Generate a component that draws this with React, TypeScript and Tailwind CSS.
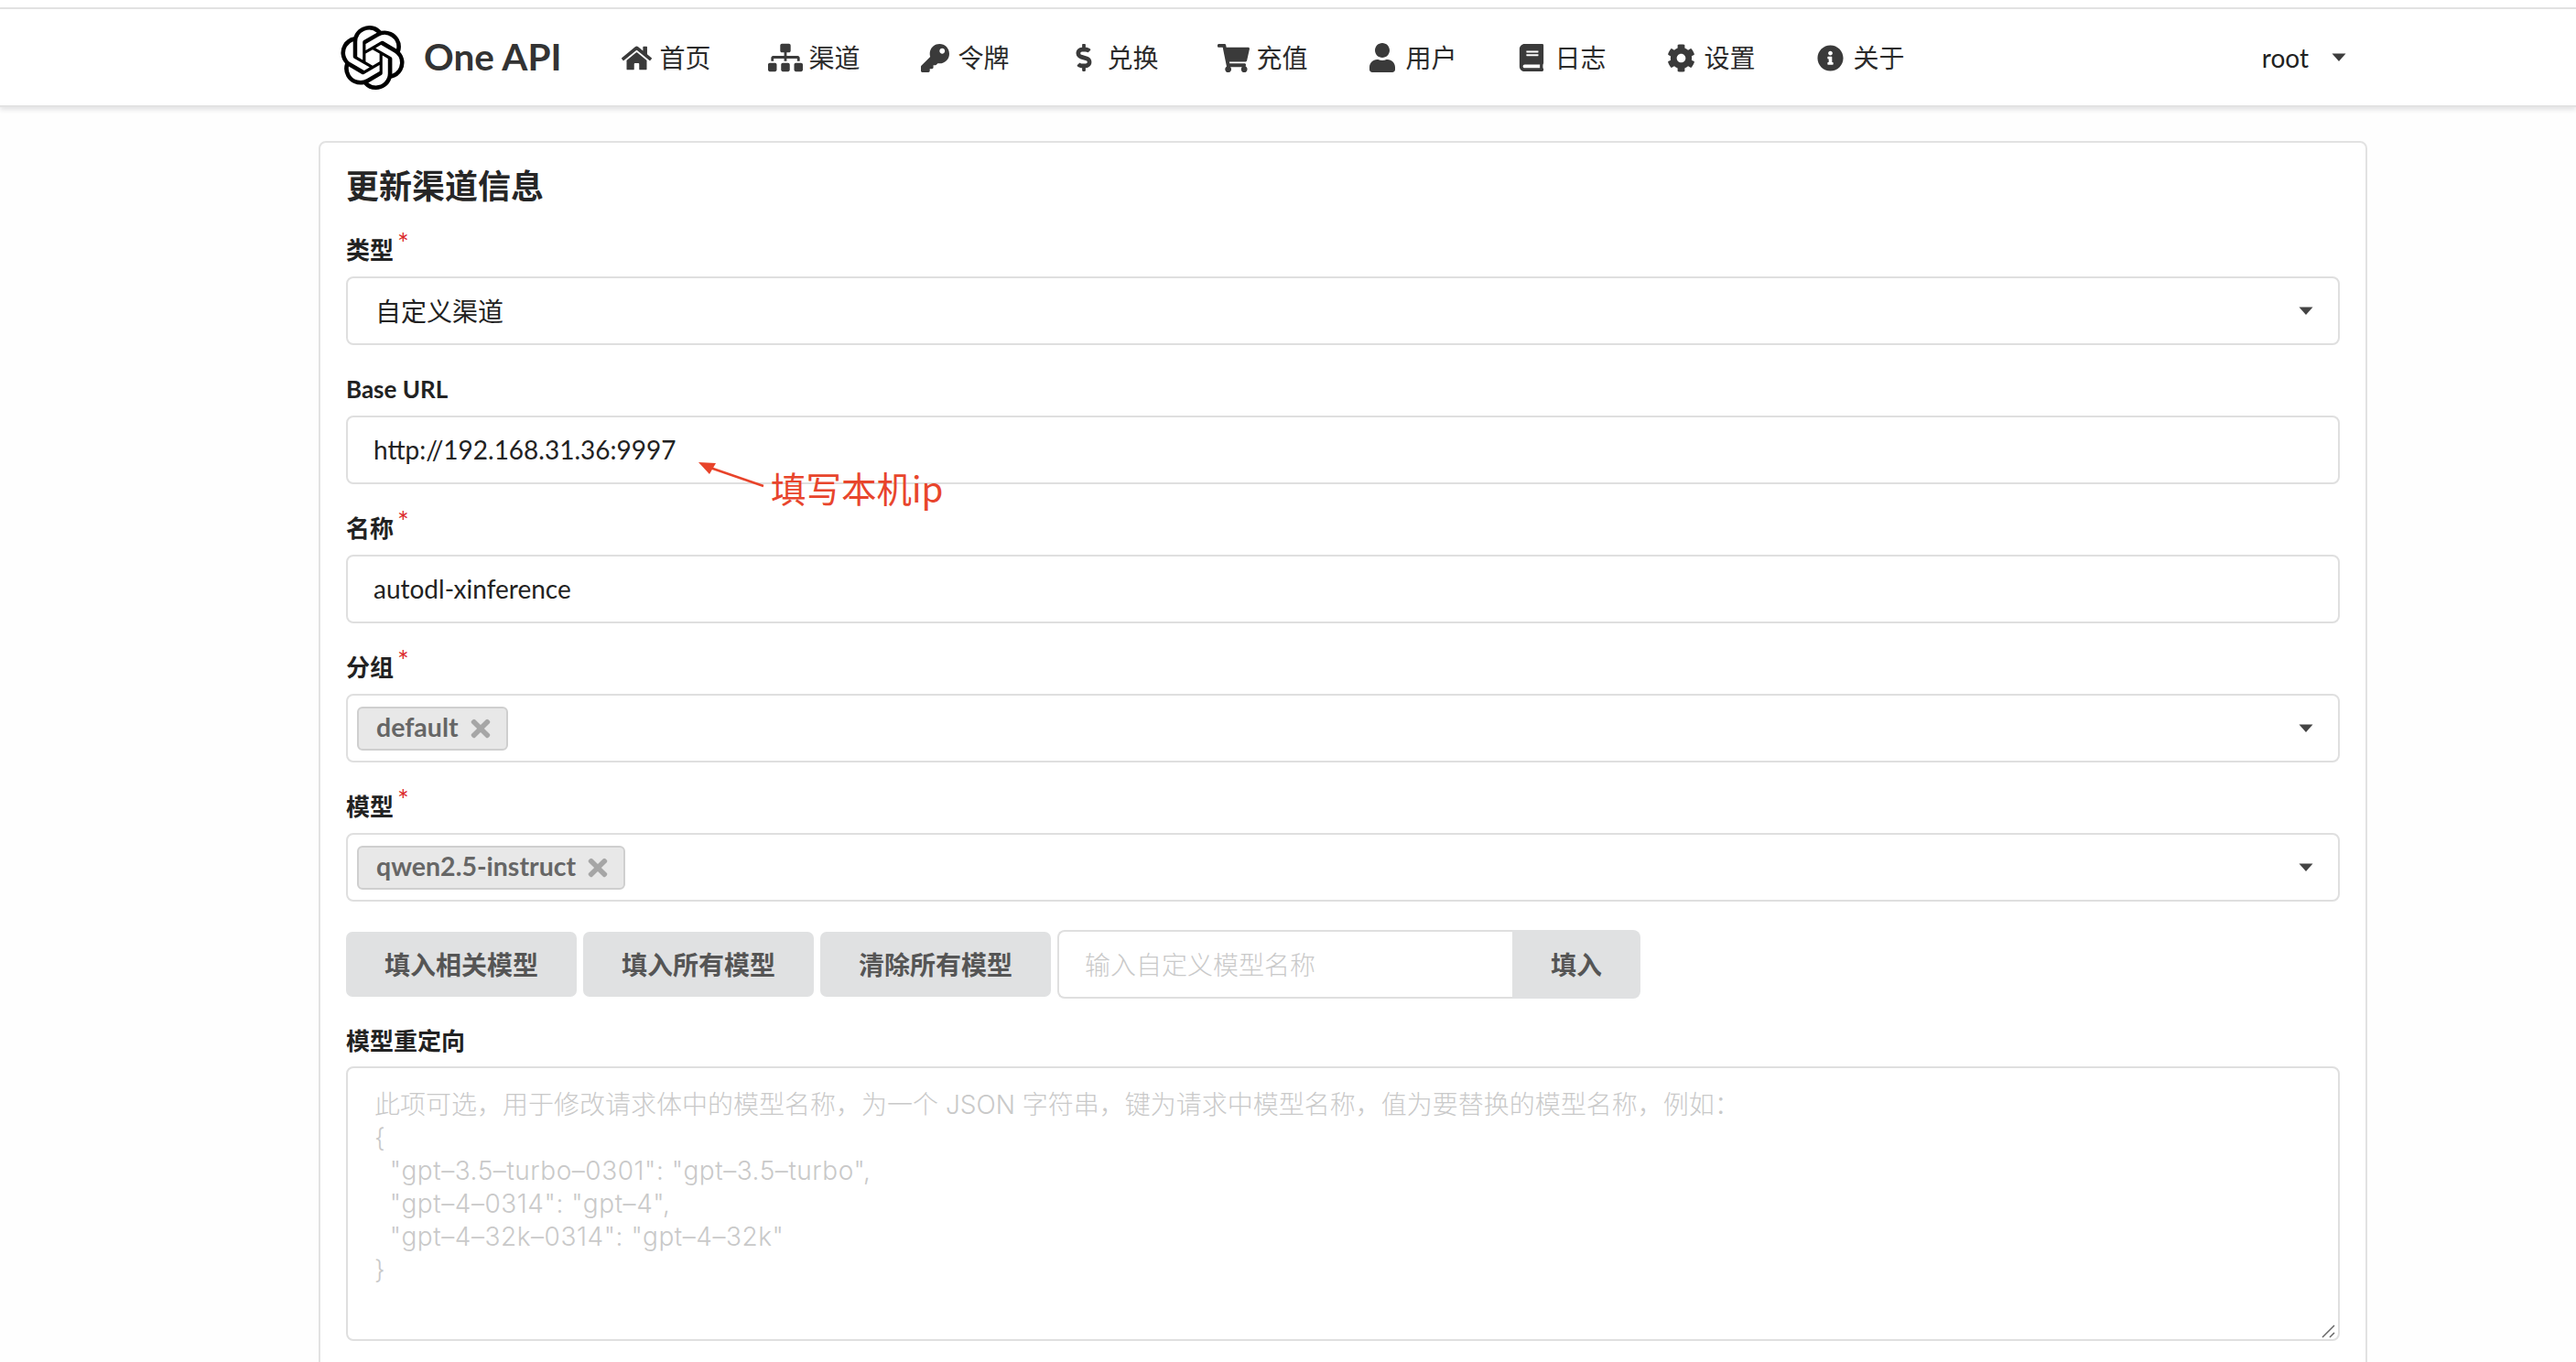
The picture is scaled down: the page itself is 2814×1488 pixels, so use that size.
import React from "react";
import { SiOpenai } from "react-icons/si";
import {
  FaHome, FaSitemap, FaKey, FaDollarSign, FaShoppingCart, FaUser, FaBook, FaCog, FaInfoCircle, FaTimes,
} from "react-icons/fa";

const FONT = "font-['Lato','Noto_Sans_CJK_SC',sans-serif]";

const NAV = [
  { label: "首页", Icon: FaHome, size: 33 },
  { label: "渠道", Icon: FaSitemap, size: 38 },
  { label: "令牌", Icon: FaKey, size: 31 },
  { label: "兑换", Icon: FaDollarSign, size: 30 },
  { label: "充值", Icon: FaShoppingCart, size: 35 },
  { label: "用户", Icon: FaUser, size: 32 },
  { label: "日志", Icon: FaBook, size: 30 },
  { label: "设置", Icon: FaCog, size: 31 },
  { label: "关于", Icon: FaInfoCircle, size: 29 },
];

function Caret({ color = "#3d3d3d" }: { color?: string }) {
  return (
    <svg width="16" height="9" viewBox="0 0 16 9" className="shrink-0">
      <path d="M0.5 0.5 H15.5 L8 9 Z" fill={color} />
    </svg>
  );
}

function Label({ text, required }: { text: string; required?: boolean }) {
  return (
    <div className="flex h-[24px] mb-[17px] items-center text-[26px] leading-[24px] font-bold text-[#222222]">
      <span>{text}</span>
      {required && <span className="ml-[4px] text-[#db2828] text-[30px] font-normal relative top-[-8px]">*</span>}
    </div>
  );
}

function Box({ children, className = "" }: { children?: React.ReactNode; className?: string }) {
  return (
    <div className={`h-[75px] w-full flex items-center rounded-[8px] border-2 border-[#dfdfdf] bg-white text-[28px] text-[#222222] ${className}`}>
      {children}
    </div>
  );
}

function Tag({ text }: { text: string }) {
  return (
    <div className="ml-[10px] h-[48px] flex items-center rounded-[6px] border-2 border-[#cfcfcf] bg-[#e8e8e8] pl-[19px] pr-[13px] text-[28.5px] font-bold text-[#666666]">
      <span className="relative top-[-1px]">{text}</span>
      <FaTimes size={30} color="#a6a6a6" className="ml-[9px]" />
    </div>
  );
}

function Btn({ text, className = "" }: { text: string; className?: string }) {
  return (
    <div className={`flex items-center justify-center bg-[#e0e1e2] text-[28px] font-bold text-[#555555] ${className}`}>
      {text}
    </div>
  );
}

export default function App() {
  return (
    <div className={`h-[1488px] overflow-hidden bg-[#fefefe] ${FONT}`}>
      <div className="h-[8px] bg-white" />
      <nav className="h-[109px] border-y-2 border-[#e2e2e2] bg-white shadow-[0_3px_5px_rgba(34,36,38,0.12)]">
        <div className="ml-[340px] w-[2255px] h-full flex items-center justify-between">
          <div className="flex items-center">
            <div className="flex items-center pl-[32px] pr-[32px]">
              <SiOpenai size={70} color="#000000" className="mt-[1px]" />
              <span className="ml-[21px] text-[40.5px] font-bold text-[#333333] leading-none">One API</span>
            </div>
            {NAV.map(({ label, Icon, size }) => (
              <div key={label} className="w-[163px] pl-[33px] mt-[1px] flex items-center text-[28px] text-[#2b2b2b]">
                <div className="w-[33px] h-[33px] flex items-center justify-center">
                  <Icon size={size} color="#3a3a3a" className="shrink-0" />
                </div>
                <span className="ml-[9px]">{label}</span>
              </div>
            ))}
          </div>
          <div className="flex items-center pr-[32px] text-[28px] text-[#222222]">
            <span>root</span>
            <span className="ml-[25px]"><Caret /></span>
          </div>
        </div>
      </nav>

      <main className="ml-[348px] mt-[37px] w-[2238px] rounded-[8px] border-2 border-[#e2e2e2] bg-white px-[28px] pt-[29px] min-h-[1400px]">
        <h2 className="h-[36px] mb-[40px] flex items-center text-[36px] font-bold text-[#262626]">更新渠道信息</h2>

        <div className="mb-[36px]">
          <Label text="类型" required />
          <Box className="justify-between pl-[30px] pr-[27px]">
            <span>自定义渠道</span>
            <Caret color="#444444" />
          </Box>
        </div>

        <div className="mb-[36px] relative">
          <Label text="Base URL" />
          <Box className="pl-[28px]"><span className="relative top-[-1px]">http://192.168.31.36:9997</span></Box>
          <div className="absolute left-[385px] top-[92px] flex items-start">
            <svg width="72" height="30" viewBox="0 0 72 30">
              <path d="M71 26 L10 5" stroke="#e8432a" strokeWidth="2.5" fill="none" />
              <path d="M0 0 L19 1 L12 13 Z" fill="#e8432a" />
            </svg>
            <span className="ml-[7px] mt-[4px] text-[38.5px] leading-[46px] text-[#e8452c] font-['Noto_Sans_CJK_SC',sans-serif]">填写本机ip</span>
          </div>
        </div>

        <div className="mb-[36px]">
          <Label text="名称" required />
          <Box className="pl-[28px]"><span className="relative top-[-1px]">autodl-xinference</span></Box>
        </div>

        <div className="mb-[36px]">
          <Label text="分组" required />
          <Box className="justify-between pr-[27px]">
            <Tag text="default" />
            <Caret color="#444444" />
          </Box>
        </div>

        <div className="mb-[31px]">
          <Label text="模型" required />
          <Box className="justify-between pr-[27px]">
            <Tag text="qwen2.5-instruct" />
            <Caret color="#444444" />
          </Box>
        </div>

        <div className="flex items-center gap-[7px] mb-[34px]">
          <Btn text="填入相关模型" className="w-[252px] h-[71px] rounded-[7px]" />
          <Btn text="填入所有模型" className="w-[252px] h-[71px] rounded-[7px]" />
          <Btn text="清除所有模型" className="w-[252px] h-[71px] rounded-[7px]" />
          <div className="flex h-[75px]">
            <div className="w-[497px] h-full flex items-center rounded-l-[8px] border-2 border-r-0 border-[#dfdfdf] bg-white pl-[28px] text-[28px] text-[#c9c9c9] font-light">
              输入自定义模型名称
            </div>
            <Btn text="填入" className="w-[140px] h-full rounded-r-[8px]" />
          </div>
        </div>

        <div>
          <div className="flex h-[24px] mb-[16px] items-center text-[26px] leading-[24px] font-bold text-[#222222]">模型重定向</div>
          <div className="relative h-[300px] rounded-[8px] border-2 border-[#dfdfdf] bg-white pl-[29px] pt-[22px] text-[28px] leading-[36px] text-[#c9c9c9] font-light font-['Inter','Noto_Sans_CJK_SC',sans-serif] whitespace-pre">
            <div>此项可选，用于修改请求体中的模型名称，为一个 JSON 字符串，键为请求中模型名称，值为要替换的模型名称，例如：</div>
            <div>{"{"}</div>
            <div className="tracking-[0.55px]">{'  "gpt–3.5–turbo–0301": "gpt–3.5–turbo",'}</div>
            <div className="tracking-[0.55px]">{'  "gpt–4–0314": "gpt–4",'}</div>
            <div className="tracking-[0.55px]">{'  "gpt–4–32k–0314": "gpt–4–32k"'}</div>
            <div>{"}"}</div>
            <svg width="16" height="16" viewBox="0 0 16 16" className="absolute right-[2px] bottom-[1px]">
              <path d="M1 15 L14 2 M9 15 L14 10" stroke="#666666" strokeWidth="1.5" fill="none" />
            </svg>
          </div>
        </div>
      </main>
    </div>
  );
}
